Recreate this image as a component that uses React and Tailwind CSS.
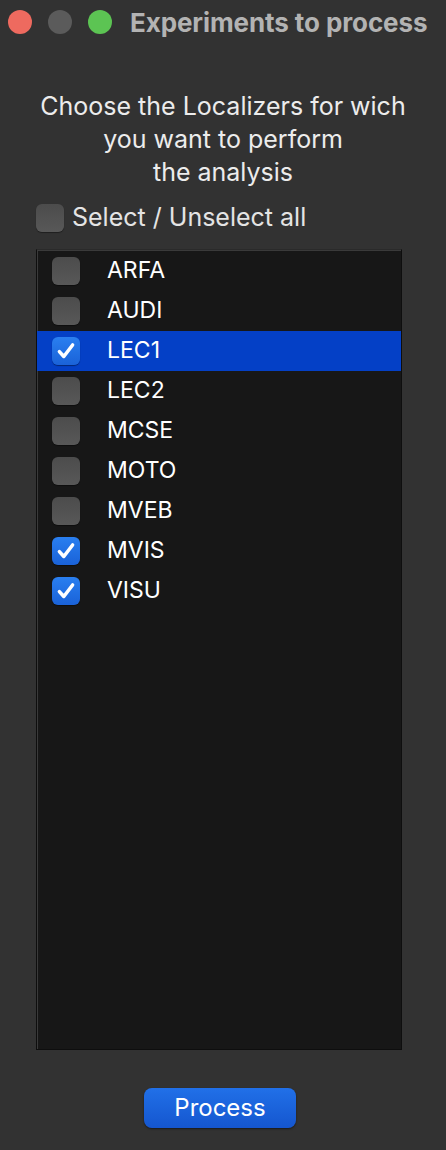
import { useState } from "react";

const items = [
  { name: "ARFA", checked: false },
  { name: "AUDI", checked: false },
  { name: "LEC1", checked: true, selected: true },
  { name: "LEC2", checked: false },
  { name: "MCSE", checked: false },
  { name: "MOTO", checked: false },
  { name: "MVEB", checked: false },
  { name: "MVIS", checked: true },
  { name: "VISU", checked: true },
];

function Box({ checked }) {
  if (checked) {
    return (
      <div className="w-[28px] h-[28px] rounded-[6px] bg-gradient-to-b from-[#2a7ff0] to-[#1a62d8] flex items-center justify-center shadow-[0_1px_1px_rgba(0,0,0,0.4)]">
        <svg width="22" height="22" viewBox="0 0 20 20" fill="none">
          <path d="M4 10.5 L8 15 L16 4.5" stroke="white" strokeWidth="3.2" strokeLinecap="round" strokeLinejoin="round" />
        </svg>
      </div>
    );
  }
  return (
    <div className="w-[28px] h-[28px] rounded-[6px] bg-gradient-to-b from-[#4c4c4c] to-[#585858] shadow-[0_1px_1px_rgba(0,0,0,0.4)]" />
  );
}

export default function App() {
  const [list] = useState(items);

  return (
    <div className="w-[446px] h-[1150px] bg-[#323232] flex flex-col font-['Inter',sans-serif] text-white overflow-hidden">
      {/* title bar */}
      <div className="h-[44px] flex items-center px-[8px] gap-[16px]">
        <div className="w-[24px] h-[24px] rounded-full bg-[#ee6a5f]" />
        <div className="w-[24px] h-[24px] rounded-full bg-[#5b5b5b]" />
        <div className="w-[24px] h-[24px] rounded-full bg-[#5cc453]" />
        <span className="ml-[2px] text-[26px] font-bold text-[#b3b3b3] tracking-[-0.1px]">
          Experiments to process
        </span>
      </div>

      <div className="mt-[46px] text-center text-[25px] leading-[33px] text-[#ececec]">
        Choose the Localizers for wich
        <br />
        you want to perform
        <br />
        the analysis
      </div>

      <div className="mt-[10px] ml-[36px] flex items-center gap-[8px]">
        <Box checked={false} />
        <span className="text-[25px] text-[#e4e4e4]">Select / Unselect all</span>
      </div>

      <div className="mt-[12px] ml-[36px] w-[366px] h-[801px] bg-[#171717] border border-[#0e0e0e] border-t-[#2a2a2a] shadow-[inset_1px_1px_0_#3a3a3a] pt-[1px]">
        {list.map((it) => (
          <div
            key={it.name}
            className={`h-[40px] flex items-center pl-[15px] ${it.selected ? "bg-[#0440c6]" : ""}`}
          >
            <Box checked={it.checked} />
            <span className="ml-[27px] text-[23px] text-white">{it.name}</span>
          </div>
        ))}
      </div>

      <div className="flex justify-center mt-[38px] pr-[6px]">
        <button className="w-[152px] h-[40px] rounded-[8px] bg-gradient-to-b from-[#2170e8] to-[#1556cf] text-white text-[24px] shadow-[0_1px_2px_rgba(0,0,0,0.5)]">
          Process
        </button>
      </div>
    </div>
  );
}
